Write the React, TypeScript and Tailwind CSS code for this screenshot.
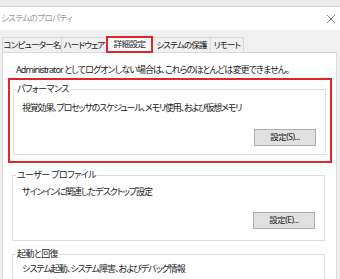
export default function App() {
  const tabs = [
    { label: "コンピューター名", w: "w-[60px]" },
    { label: "ハードウェア", w: "w-[46px]" },
    { label: "詳細設定", w: "w-[47px]" },
    { label: "システムの保護", w: "w-[59px]" },
    { label: "リモート", w: "w-[34px]" },
  ];

  return (
    <div className="w-[340px] h-[279px] overflow-hidden bg-[#f0f0f0] font-['Noto_Sans','Noto_Sans_CJK_JP',sans-serif] [font-feature-settings:'palt'] text-[#1a1a1a]">
      <div className="h-[7px] bg-[#ececec] border-b border-[#d4d4d4]" />
      <div className="h-[23px] bg-white flex items-center justify-between pl-[1px] pr-[3px]">
        <span className="text-[8.5px] text-[#9a9a9a] tracking-[-0.6px]">システムのプロパティ</span>
        <svg width="10" height="10" viewBox="0 0 10 10" className="mr-[1px]">
          <path d="M1 1 L9 9 M9 1 L1 9" stroke="#808080" strokeWidth="1" />
        </svg>
      </div>

      <div className="flex items-end h-[22px] pl-[2px]">
        {tabs.map((t, i) =>
          i === 2 ? (
            <div
              key={t.label}
              className={`${t.w} h-[17px] -mb-px -ml-px z-10 bg-white border-2 border-[#e3242b] flex items-center justify-center whitespace-nowrap text-[8.5px] tracking-[-0.5px]`}
            >
              {t.label}
            </div>
          ) : (
            <div
              key={t.label}
              className={`${t.w} h-[15px] border border-b-0 border-[#d9d9d9] -ml-px first:ml-0 bg-[#f0f0f0] flex items-center justify-center whitespace-nowrap text-[8.5px] tracking-[-0.8px]`}
            >
              {t.label}
            </div>
          )
        )}
      </div>

      <div className="ml-[2px] w-[335px] h-[240px] bg-white border border-[#d9d9d9] pt-[10px]">
        <p className="pl-[13px] text-[9px] leading-[14px] tracking-[-0.9px] whitespace-nowrap">
          Administrator としてログオンしない場合は、これらのほとんどは変更できません。
        </p>

        <div className="ml-[5px] mt-[1px] w-[324px] border-2 border-[#e3242b] pt-[3px] pl-[3px] pr-[4px] pb-[6px]">
          <fieldset className="border border-[#dcdcdc] h-[72px] pl-[8px] pr-[9px]">
            <legend className="ml-[-6px] px-[1px] text-[9px] leading-[12px] tracking-[-0.6px]">
              パフォーマンス
            </legend>
            <p className="text-[9px] leading-[14px] mt-[6px] tracking-[-1.2px] whitespace-nowrap">
              視覚効果、プロセッサのスケジュール、メモリ使用、および仮想メモリ
            </p>
            <div className="flex justify-end mt-[14px]">
              <button className="w-[62px] h-[17px] bg-[#e1e1e1] border border-[#adadad] text-[8.5px] leading-none tracking-[-0.5px]">
                設定(S)...
              </button>
            </div>
          </fieldset>
        </div>

        <fieldset className="ml-[9px] mt-[6px] w-[313px] h-[72px] border border-[#dcdcdc] pl-[9px] pr-[9px]">
          <legend className="ml-[-6px] px-[1px] text-[9px] leading-[12px] tracking-[-0.6px]">
            ユーザー プロファイル
          </legend>
          <p className="text-[9px] leading-[14px] mt-[4px] tracking-[-1px] whitespace-nowrap">
            サインインに関連したデスクトップ設定
          </p>
          <div className="flex justify-end mt-[13px]">
            <button className="w-[62px] h-[17px] bg-[#e1e1e1] border border-[#adadad] text-[8.5px] leading-none tracking-[-0.5px]">
              設定(E)...
            </button>
          </div>
        </fieldset>

        <fieldset className="ml-[9px] mt-[7px] w-[313px] h-[72px] border border-[#dcdcdc] pl-[9px] pr-[9px]">
          <legend className="ml-[-6px] px-[1px] text-[9px] leading-[12px] tracking-[-0.6px]">
            起動と回復
          </legend>
          <p className="text-[9px] leading-[14px] mt-[2px] tracking-[-1px] whitespace-nowrap">
            システム起動、システム障害、およびデバッグ情報
          </p>
        </fieldset>
      </div>
    </div>
  );
}
